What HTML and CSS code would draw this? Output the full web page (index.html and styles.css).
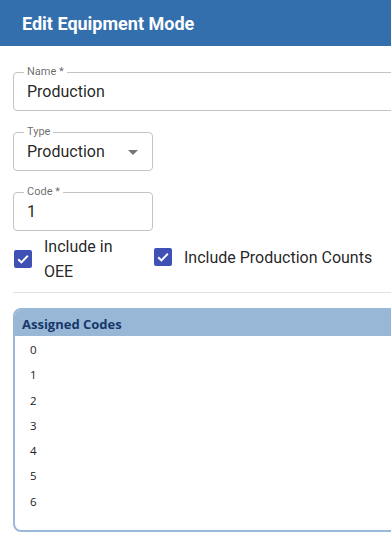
FILE: index.html
```html
<!DOCTYPE html>
<html lang="en">
<head>
    <meta charset="UTF-8">
    <meta name="viewport" content="width=device-width, initial-scale=1.0">
    <title>Edit Equipment Mode</title>
    <link rel="stylesheet" href="styles.css">
</head>
<body>
    <header class="dialog-header">
        <h1>Edit Equipment Mode</h1>
    </header>

    <main class="dialog-body">
        <div class="field field-wide">
            <label class="field-label">Name *</label>
            <div class="field-value">Production</div>
        </div>

        <div class="field field-short">
            <label class="field-label">Type</label>
            <div class="field-value">Production</div>
            <span class="select-arrow"></span>
        </div>

        <div class="field field-short">
            <label class="field-label">Code *</label>
            <div class="field-value">1</div>
        </div>

        <div class="check-row">
            <label class="check check-narrow">
                <span class="check-box">
                    <svg viewBox="0 0 18 18" width="18" height="18"><path d="M4.2 9.2l3.2 3.2 6.4-6.6" fill="none" stroke="#fff" stroke-width="2"/></svg>
                </span>
                <span class="check-text">Include in OEE</span>
            </label>
            <label class="check">
                <span class="check-box">
                    <svg viewBox="0 0 18 18" width="18" height="18"><path d="M4.2 9.2l3.2 3.2 6.4-6.6" fill="none" stroke="#fff" stroke-width="2"/></svg>
                </span>
                <span class="check-text">Include Production Counts</span>
            </label>
        </div>

        <hr class="divider">

        <section class="codes-panel">
            <div class="codes-header">Assigned Codes</div>
            <ul class="codes-list">
                <li>0</li>
                <li>1</li>
                <li>2</li>
                <li>3</li>
                <li>4</li>
                <li>5</li>
                <li>6</li>
            </ul>
        </section>
    </main>
</body>
</html>
```

FILE: styles.css
```css
html, body {
    overflow: hidden;
}

body {
    margin: 0;
    padding: 0;
    font-family: Roboto, "Noto Sans", Arial, sans-serif;
    background: white;
    color: rgba(0, 0, 0, 0.87);
}

.dialog-header {
    background-color: #336ead;
    height: 46px;
    display: flex;
    align-items: center;
    padding: 0 22px;
}

.dialog-header h1 {
    margin: 0;
    color: white;
    font-size: 18px;
    font-weight: 700;
    line-height: 1;
    padding-top: 1px;
}

.dialog-body {
    padding: 26px 0 0 13px;
    width: 440px;
}

.field {
    position: relative;
    box-sizing: border-box;
    height: 39px;
    border: 1px solid #c4c4c4;
    border-radius: 4px;
    padding: 0 13px;
    display: flex;
    align-items: center;
    margin-bottom: 21px;
}

.field-wide {
    width: 440px;
}

.field-short {
    width: 140px;
}

.field-label {
    position: absolute;
    top: -7px;
    left: 10px;
    padding: 0 3px;
    background: white;
    font-size: 11px;
    line-height: 12px;
    color: rgba(0, 0, 0, 0.6);
}

.field-value {
    font-size: 16px;
    padding-top: 0;
}

.select-arrow {
    position: absolute;
    right: 14px;
    top: 17px;
    width: 0;
    height: 0;
    border-left: 5px solid transparent;
    border-right: 5px solid transparent;
    border-top: 5px solid #757575;
}

.check-row {
    display: flex;
    align-items: center;
    gap: 21px;
    margin-top: -21px;
    height: 52px;
}

.check {
    display: flex;
    align-items: center;
    gap: 12px;
    font-size: 16px;
    line-height: 25px;
    color: rgba(0, 0, 0, 0.87);
}

.check-narrow {
    width: 119px;
    padding-top: 4px;
}

.check-narrow .check-text {
    width: 80px;
}

.check-box {
    flex: none;
    width: 18px;
    height: 18px;
    margin-left: 1px;
    background: #3f51b5;
    border-radius: 2px;
    display: flex;
}

.divider {
    margin: 9px 0 0;
    border: none;
    border-top: 1px solid #e0e0e0;
    height: 0;
}

.codes-panel {
    margin-top: 15px;
    width: 440px;
    height: 224px;
    box-sizing: border-box;
    border: 2px solid #9ab8d8;
    border-radius: 8px;
    overflow: hidden;
}

.codes-header {
    background-color: #98b7d7;
    height: 26px;
    line-height: 28px;
    padding-left: 7px;
    font-family: "Open Sans", "DejaVu Sans", sans-serif;
    font-weight: 700;
    font-size: 13px;
    color: #17386a;
}

.codes-list {
    list-style: none;
    margin: 0;
    padding: 1px 0 0 15px;
    font-family: "Open Sans", "DejaVu Sans", sans-serif;
    font-size: 11.5px;
    line-height: 25.3px;
    color: #222;
}
```
